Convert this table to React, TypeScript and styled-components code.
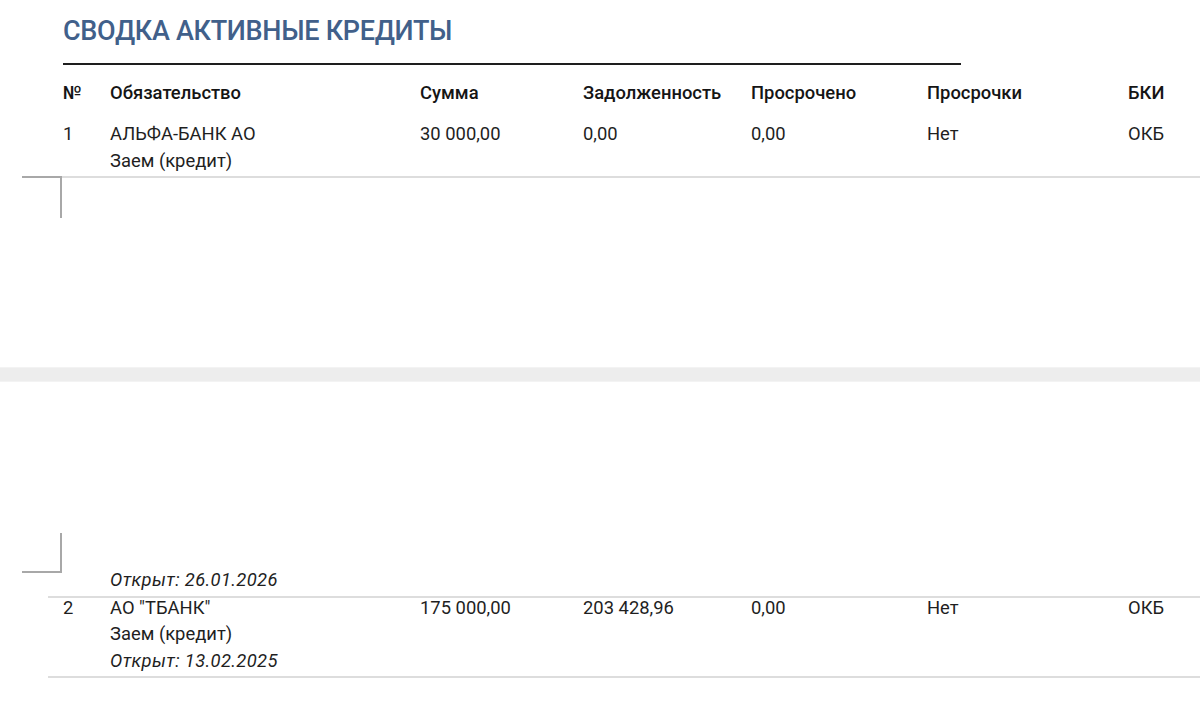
import React from "react";
import styled, { createGlobalStyle } from "styled-components";

const Global = createGlobalStyle`
  html, body { margin: 0; padding: 0; background: #ffffff; }
  body { font-family: Roboto, "Noto Sans", "Liberation Sans", sans-serif; color: #1c1c1c; }
`;

const Viewer = styled.div`
  width: 1200px;
  height: 724px;
  overflow: hidden;
  display: flex;
  flex-direction: column;
  background: #ffffff;
`;

const Page = styled.section<{ $h: number; $pt?: number }>`
  position: relative;
  height: ${(p) => p.$h}px;
  padding-top: ${(p) => p.$pt ?? 0}px;
  box-sizing: border-box;
  background: #ffffff;
  display: flex;
  flex-direction: column;
  flex-shrink: 0;
`;

const PageGap = styled.div`
  height: 13px;
  flex-shrink: 0;
  background: #ededed;
  border-top: 1px solid #f3f3f3;
  border-bottom: 1px solid #f3f3f3;
`;

const Title = styled.h1`
  margin: 0 0 0 63px;
  font-family: Roboto, "Noto Sans", sans-serif;
  font-weight: 500;
  font-size: 27px;
  line-height: 34px;
  color: #41608a;
  letter-spacing: -0.3px;
`;

const Rule = styled.div`
  margin: 15px 0 0 63px;
  width: 898px;
  height: 2px;
  background: #1e1e1e;
`;

const Grid = styled.div`
  display: grid;
  grid-template-columns: 47px 310px 163px 168px 176px 201px 1fr;
`;

const HeadRow = styled(Grid)`
  margin-top: 15px;
  padding-left: 63px;
  font-size: 18.4px;
  font-weight: 500;
  line-height: 26px;
  color: #151515;
`;

const BodyRow = styled(Grid)<{ $mt?: number; $noBorder?: boolean }>`
  margin-top: ${(p) => p.$mt ?? 0}px;
  margin-left: 48px;
  padding-left: 15px;
  padding-bottom: 2px;
  font-size: 18.4px;
  line-height: 26.5px;
  color: #1f1f1f;
  border-bottom: ${(p) => (p.$noBorder ? "none" : "2px solid #dddddd")};
`;

const Cell = styled.div`
  white-space: nowrap;
`;

const Sub = styled.div`
  white-space: nowrap;
`;

const Opened = styled.div`
  font-style: italic;
  letter-spacing: 0.35px;
  white-space: nowrap;
`;

const Spacer = styled.div`
  flex: 1;
`;

const Corner = styled.div<{ $top: number; $len: number; $flip?: boolean }>`
  position: absolute;
  left: 22px;
  top: ${(p) => p.$top}px;
  width: 40px;
  height: ${(p) => p.$len}px;
  box-sizing: border-box;
  border-right: 2px solid #a8a8a8;
  ${(p) =>
    p.$flip
      ? "border-bottom: 2px solid #a8a8a8;"
      : "border-top: 2px solid #a8a8a8;"}
`;

const BodyRowBorderOnly = styled.div`
  margin-left: 48px;
  height: 0;
  border-bottom: 2px solid #dddddd;
`;

const BottomSpace = styled.div`
  height: 48px;
  flex-shrink: 0;
`;

const headers = ["№", "Обязательство", "Сумма", "Задолженность", "Просрочено", "Просрочки", "БКИ"];

export default function App() {
  return (
    <Viewer>
      <Global />
      <Page $h={367} $pt={14}>
        <Title>СВОДКА АКТИВНЫЕ КРЕДИТЫ</Title>
        <Rule />
        <HeadRow>
          {headers.map((h) => (
            <Cell key={h}>{h}</Cell>
          ))}
        </HeadRow>
        <BodyRow $mt={15} $noBorder>
          <Cell>1</Cell>
          <Cell>
            <div>АЛЬФА-БАНК АО</div>
            <Sub>Заем (кредит)</Sub>
          </Cell>
          <Cell>30 000,00</Cell>
          <Cell>0,00</Cell>
          <Cell>0,00</Cell>
          <Cell>Нет</Cell>
          <Cell>ОКБ</Cell>
        </BodyRow>
        <BodyRowBorderOnly />
        <Corner $top={176} $len={42} />
      </Page>
      <PageGap />
      <Page $h={344}>
        <Corner $top={151} $len={40} $flip />
        <Spacer />
        <BodyRow>
          <Cell />
          <Cell>
            <Opened>Открыт: 26.01.2026</Opened>
          </Cell>
          <Cell />
          <Cell />
          <Cell />
          <Cell />
          <Cell />
        </BodyRow>
        <BodyRow $mt={-3}>
          <Cell>2</Cell>
          <Cell>
            <div>АО "ТБАНК"</div>
            <Sub>Заем (кредит)</Sub>
            <Opened>Открыт: 13.02.2025</Opened>
          </Cell>
          <Cell>175 000,00</Cell>
          <Cell>203 428,96</Cell>
          <Cell>0,00</Cell>
          <Cell>Нет</Cell>
          <Cell>ОКБ</Cell>
        </BodyRow>
        <BottomSpace />
      </Page>
    </Viewer>
  );
}
